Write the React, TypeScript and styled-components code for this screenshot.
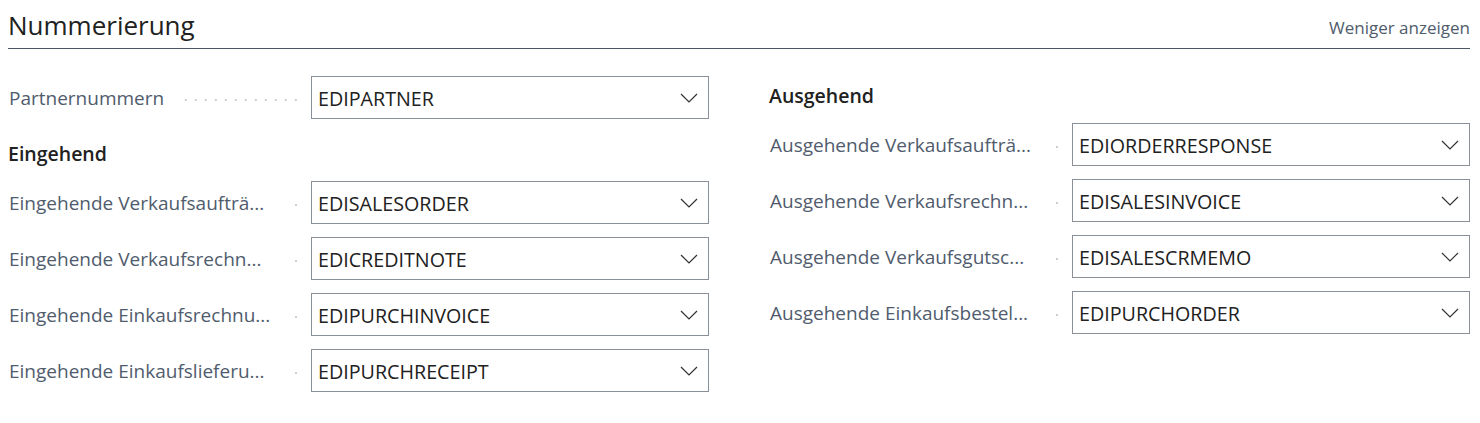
import React from 'react';
import styled, { createGlobalStyle } from 'styled-components';

const GlobalStyle = createGlobalStyle`
  body {
    margin: 0;
    background: #ffffff;
    font-family: 'Open Sans', 'Noto Sans', sans-serif;
  }
`;

const Page = styled.div`
  padding: 0 10px 0 8px;
`;

const SectionHeader = styled.div`
  display: flex;
  align-items: center;
  justify-content: space-between;
  height: 48px;
  border-bottom: 1px solid #4b5566;
`;

const SectionTitle = styled.h2`
  margin: 2px 0 0 0;
  font-size: 26px;
  font-weight: 400;
  color: #212121;
`;

const ToggleLink = styled.span`
  font-size: 17px;
  color: #505c6d;
  margin-top: 6px;
`;

const Columns = styled.div`
  display: grid;
  grid-template-columns: 701px 701px;
  column-gap: 60px;
  padding-top: 27px;
`;

const Column = styled.div`
  display: flex;
  flex-direction: column;
`;

const GroupHeading = styled.div<{ $first?: boolean }>`
  height: 47px;
  margin-top: ${p => (p.$first ? '0' : '2px')};
  font-size: 19.5px;
  font-weight: 600;
  color: #212121;
  line-height: 40px;
`;

const Row = styled.div`
  display: flex;
  align-items: center;
  height: 43px;
  margin-bottom: 13px;
`;

const LabelCell = styled.div`
  display: flex;
  align-items: center;
  width: 303px;
  padding-right: 10px;
  box-sizing: border-box;
  flex-shrink: 0;
`;

const LabelText = styled.span`
  flex: 0 1 auto;
  min-width: 0;
  padding-left: 1px;
  font-size: 19px;
  color: #505c6d;
  white-space: nowrap;
  overflow: hidden;
`;

const Leader = styled.span`
  flex: 1 0 4px;
  margin-left: 16px;
  height: 4px;
  margin-top: 4px;
  background-image: radial-gradient(circle, #cfcfcf 1px, transparent 1.4px);
  background-size: 10px 4px;
  background-position: right center;
  background-repeat: repeat-x;
  max-width: 8px;

  &[data-long] {
    max-width: none;
  }
`;

const Field = styled.div`
  flex: 1;
  height: 43px;
  box-sizing: border-box;
  border: 1px solid #8a9099;
  display: flex;
  align-items: center;
  justify-content: space-between;
  padding: 1px 10px 0 6px;
  font-size: 19.7px;
  color: #212121;
`;

const LabelCellEnd = styled(LabelCell)`
  justify-content: space-between;
`;

const Chevron = () => (
  <svg width="18" height="10" viewBox="0 0 18 10" fill="none">
    <polyline points="1,1 9,9 17,1" stroke="#333" strokeWidth="1.2" />
  </svg>
);

type Entry = { label: string; value: string; full?: boolean };

const FieldRow = ({ label, value, full }: Entry) => (
  <Row>
    <LabelCellEnd>
      <LabelText>{label}</LabelText>
      <Leader data-long={full ? '' : undefined} />
    </LabelCellEnd>
    <Field>
      <span>{value}</span>
      <Chevron />
    </Field>
  </Row>
);

const incoming: Entry[] = [
  { label: 'Eingehende Verkaufsaufträ...', value: 'EDISALESORDER' },
  { label: 'Eingehende Verkaufsrechn...', value: 'EDICREDITNOTE' },
  { label: 'Eingehende Einkaufsrechnu...', value: 'EDIPURCHINVOICE' },
  { label: 'Eingehende Einkaufslieferu...', value: 'EDIPURCHRECEIPT' },
];

const outgoing: Entry[] = [
  { label: 'Ausgehende Verkaufsaufträ...', value: 'EDIORDERRESPONSE' },
  { label: 'Ausgehende Verkaufsrechn...', value: 'EDISALESINVOICE' },
  { label: 'Ausgehende Verkaufsgutsc...', value: 'EDISALESCRMEMO' },
  { label: 'Ausgehende Einkaufsbestel...', value: 'EDIPURCHORDER' },
];

export default function App() {
  return (
    <Page>
      <GlobalStyle />
      <SectionHeader>
        <SectionTitle>Nummerierung</SectionTitle>
        <ToggleLink>Weniger anzeigen</ToggleLink>
      </SectionHeader>
      <Columns>
        <Column>
          <FieldRow label="Partnernummern" value="EDIPARTNER" full />
          <GroupHeading>Eingehend</GroupHeading>
          {incoming.map(e => (
            <FieldRow key={e.value} {...e} />
          ))}
        </Column>
        <Column>
          <GroupHeading $first>Ausgehend</GroupHeading>
          {outgoing.map(e => (
            <FieldRow key={e.value} {...e} />
          ))}
        </Column>
      </Columns>
    </Page>
  );
}
